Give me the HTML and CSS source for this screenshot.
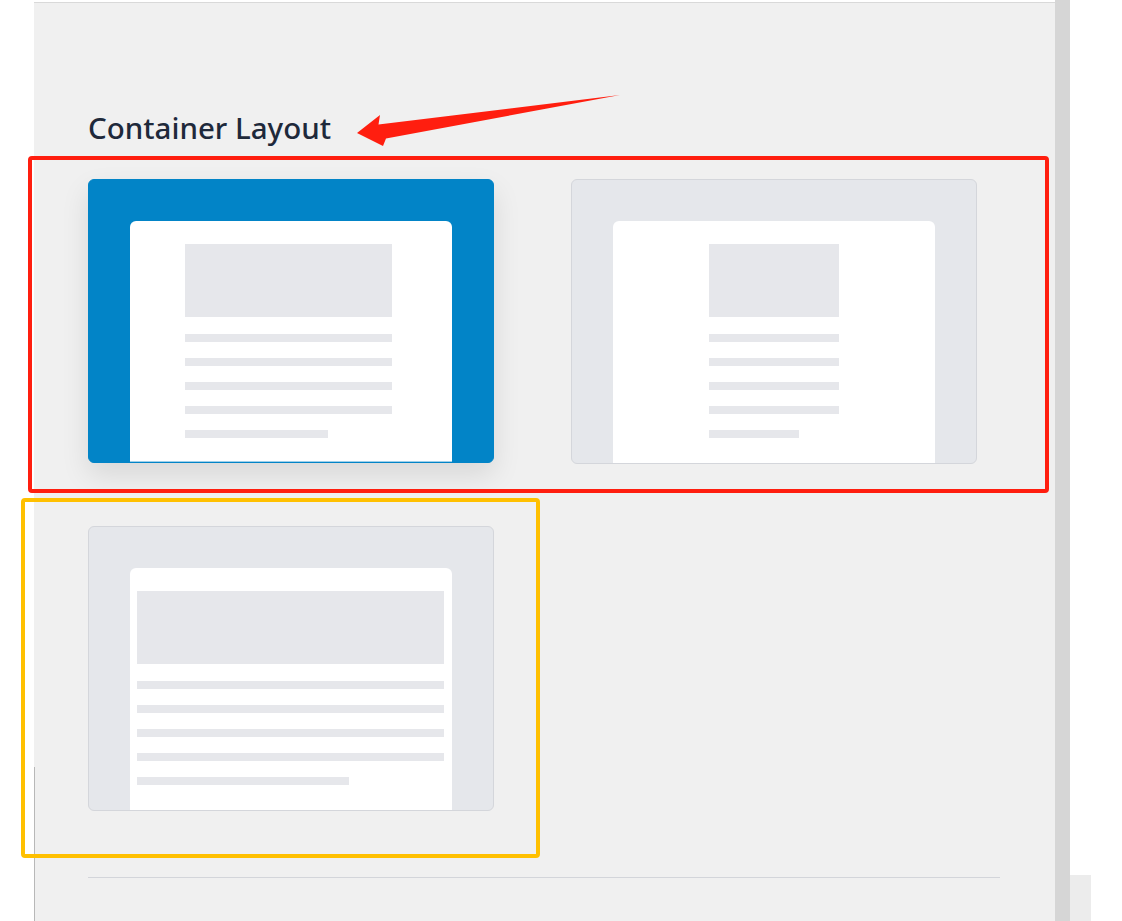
FILE: index.html
```html
<!DOCTYPE html>
<html lang="en">
<head>
<meta charset="utf-8">
<title>Container Layout</title>
<link rel="stylesheet" href="styles.css">
</head>
<body>
<div class="page">
  <div class="left-strip"></div>
  <main class="panel">
    <h2 class="title">Container Layout</h2>
    <div class="layouts">
      <div class="card card-active">
        <div class="sheet sheet-boxed">
          <div class="ph-block"></div>
          <div class="ph-line"></div>
          <div class="ph-line"></div>
          <div class="ph-line"></div>
          <div class="ph-line"></div>
          <div class="ph-line ph-short"></div>
        </div>
      </div>
      <div class="card">
        <div class="sheet sheet-narrow">
          <div class="ph-block"></div>
          <div class="ph-line"></div>
          <div class="ph-line"></div>
          <div class="ph-line"></div>
          <div class="ph-line"></div>
          <div class="ph-line ph-short"></div>
        </div>
      </div>
      <div class="card">
        <div class="sheet sheet-full">
          <div class="ph-block"></div>
          <div class="ph-line"></div>
          <div class="ph-line"></div>
          <div class="ph-line"></div>
          <div class="ph-line"></div>
          <div class="ph-line ph-short"></div>
        </div>
      </div>
    </div>
    <hr class="divider">
  </main>
  <div class="scrollbar"></div>
  <div class="side"><div class="side-block"></div></div>

  <div class="edge-line"></div>
  <div class="mark mark-red"></div>
  <div class="mark mark-yellow"></div>
  <svg class="arrow" width="280" height="60" viewBox="350 90 280 60" aria-hidden="true">
    <polygon points="357,133 380,115 378.5,124.5 620,95 386,138.5 383,146" fill="#ff1e0f"/>
  </svg>
</div>
</body>
</html>
```

FILE: styles.css
```css
* { box-sizing: border-box; }

html, body {
  margin: 0;
  padding: 0;
  background: #ffffff;
}

.page {
  position: relative;
  display: flex;
  width: 1122px;
  height: 921px;
  overflow: hidden;
  font-family: "Noto Sans", "Open Sans", sans-serif;
}

.left-strip {
  width: 34px;
  flex: none;
  background: #ffffff;
}

.panel {
  width: 1021px;
  flex: none;
  margin-top: 2px;
  border-top: 1px solid #d9d9d9;
  background: #f0f0f0;
  padding: 107px 55px 0 54px;
}

.title {
  margin: 0;
  font-size: 29.5px;
  line-height: 36px;
  font-weight: 500;
  color: #1e293b;
  letter-spacing: 0;
}

.layouts {
  margin-top: 33px;
  display: grid;
  grid-template-columns: 406px 406px;
  column-gap: 77px;
  row-gap: 62px;
}

.card {
  height: 285px;
  padding: 41px 41px 0;
  border: 1px solid #d4d6db;
  border-radius: 6px;
  background: #e5e7eb;
  display: flex;
}

.card-active {
  background: #0284c7;
  border-color: #0284c7;
  height: 284px;
  box-shadow: 0 12px 28px rgba(0, 0, 0, 0.1);
}

.sheet {
  flex: 1;
  background: #ffffff;
  border-radius: 6px 6px 0 0;
  padding-top: 23px;
  display: flex;
  flex-direction: column;
  gap: 16px;
}

.card-active .sheet {
  border-bottom: 1px solid #9fd0ea;
}

.sheet-boxed { padding-left: 55px; padding-right: 60px; }
.sheet-narrow { padding-left: 96px; padding-right: 96px; }
.sheet-full { padding-left: 7px; padding-right: 8px; }

.ph-block {
  height: 73px;
  background: #e6e7eb;
  margin-bottom: 1px;
}

.ph-line {
  height: 8px;
  background: #e6e7eb;
}

.ph-short { width: 69%; }

.divider {
  margin: 66px 0 0 0;
  border: 0;
  border-top: 1px solid #d3d5da;
  height: 0;
}

.scrollbar {
  width: 15px;
  flex: none;
  background: #d6d6d6;
}

.side {
  flex: 1;
  display: flex;
  flex-direction: column;
  justify-content: flex-end;
}

.side-block {
  width: 21px;
  height: 46px;
  background: #ececec;
}

.edge-line {
  position: absolute;
  left: 34px;
  top: 767px;
  width: 1px;
  height: 154px;
  background: #b8b8b8;
}

.mark {
  position: absolute;
  border-width: 4px;
  border-style: solid;
  border-radius: 4px;
  pointer-events: none;
}

.mark-red {
  left: 28px;
  top: 156px;
  width: 1021px;
  height: 337px;
  border-color: #ff1e0f;
}

.mark-yellow {
  left: 21px;
  top: 498px;
  width: 519px;
  height: 360px;
  border-color: #ffc000;
}

.arrow {
  position: absolute;
  left: 350px;
  top: 90px;
}
```
